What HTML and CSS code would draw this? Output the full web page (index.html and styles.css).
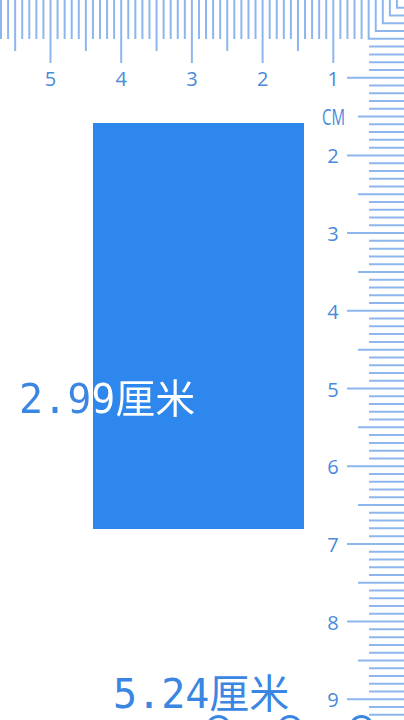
FILE: index.html
```html
<!DOCTYPE html>
<html lang="zh-CN">
<head>
<meta charset="utf-8">
<title>尺子</title>
<link rel="stylesheet" href="styles.css">
</head>
<body>
<main class="stage">
  <svg class="rulers" width="404" height="720" viewBox="0 0 404 720" xmlns="http://www.w3.org/2000/svg">
    <path class="ticks" d="M361.58 0v39M354.51 0v39M347.44 0v39M340.37 0v39M333.3 0v63M326.23 0v39M319.16 0v39M312.09 0v39M305.02 0v39M297.95 0v51M290.88 0v39M283.81 0v39M276.74 0v39M269.67 0v39M262.6 0v63M255.53 0v39M248.46 0v39M241.39 0v39M234.32 0v39M227.25 0v51M220.18 0v39M213.11 0v39M206.04 0v39M198.97 0v39M191.9 0v63M184.83 0v39M177.76 0v39M170.69 0v39M163.62 0v39M156.55 0v51M149.48 0v39M142.41 0v39M135.34 0v39M128.27 0v39M121.2 0v63M114.13 0v39M107.06 0v39M99.99 0v39M92.92 0v39M85.85 0v51M78.78 0v39M71.71 0v39M64.64 0v39M57.57 0v39M50.5 0v63M43.43 0v39M36.36 0v39M29.29 0v39M22.22 0v39M15.15 0v51M8.08 0v39M1.01 0v39"/>
    <path class="ticks" d="M396.93 0V7.77H404M389.86 0V15.54H404M382.79 0V23.31H404M375.72 0V31.08H404M368.65 0V38.85H404"/>
    <path class="ticks" d="M369 46.62h35M369 54.39h35M369 62.16h35M369 69.93h35M347 77.7h57M369 85.47h35M369 93.24h35M369 101.01h35M369 108.78h35M358 116.55h46M369 124.32h35M369 132.09h35M369 139.86h35M369 147.63h35M347 155.4h57M369 163.17h35M369 170.94h35M369 178.71h35M369 186.48h35M358 194.25h46M369 202.02h35M369 209.79h35M369 217.56h35M369 225.33h35M347 233.1h57M369 240.87h35M369 248.64h35M369 256.41h35M369 264.18h35M358 271.95h46M369 279.72h35M369 287.49h35M369 295.26h35M369 303.03h35M347 310.8h57M369 318.57h35M369 326.34h35M369 334.11h35M369 341.88h35M358 349.65h46M369 357.42h35M369 365.19h35M369 372.96h35M369 380.73h35M347 388.5h57M369 396.27h35M369 404.04h35M369 411.81h35M369 419.58h35M358 427.35h46M369 435.12h35M369 442.89h35M369 450.66h35M369 458.43h35M347 466.2h57M369 473.97h35M369 481.74h35M369 489.51h35M369 497.28h35M358 505.05h46M369 512.82h35M369 520.59h35M369 528.36h35M369 536.13h35M347 543.9h57M369 551.67h35M369 559.44h35M369 567.21h35M369 574.98h35M358 582.75h46M369 590.52h35M369 598.29h35M369 606.06h35M369 613.83h35M347 621.6h57M369 629.37h35M369 637.14h35M369 644.91h35M369 652.68h35M358 660.45h46M369 668.22h35M369 675.99h35M369 683.76h35M369 691.53h35M347 699.3h57M369 707.07h35M369 714.84h35"/>

    <g class="scale-num">
      <text x="50.5" y="86">5</text>
      <text x="121.2" y="86">4</text>
      <text x="191.9" y="86">3</text>
      <text x="262.6" y="86">2</text>
      <text x="333.3" y="86">1</text>
      <text x="333" y="163.4">2</text>
      <text x="333" y="241.1">3</text>
      <text x="333" y="318.8">4</text>
      <text x="333" y="396.5">5</text>
      <text x="333" y="474.2">6</text>
      <text x="333" y="551.9">7</text>
      <text x="333" y="629.6">8</text>
      <text x="333" y="707.3">9</text>
      <text class="unit" x="333.5" y="124.5" textLength="23" lengthAdjust="spacingAndGlyphs">CM</text>
    </g>

    <g class="handles">
      <circle cx="218.5" cy="727.5" r="11"/>
      <circle cx="290" cy="727.5" r="11"/>
      <circle cx="361.5" cy="727.5" r="11"/>
    </g>
  </svg>

  <div class="box"></div>
  <p class="measure measure-w">2.99厘米</p>
  <p class="measure measure-h">5.24厘米</p>
</main>
</body>
</html>
```

FILE: styles.css
```css
html, body {
  margin: 0;
  padding: 0;
  background: #ffffff;
}

.stage {
  position: relative;
  width: 404px;
  height: 720px;
  overflow: hidden;
  background: #ffffff;
}

.rulers {
  position: absolute;
  left: 0;
  top: 0;
  display: block;
}

.ticks {
  fill: none;
  stroke: #8db6ee;
  stroke-width: 2;
  stroke-linejoin: miter;
}

.scale-num {
  font-family: "Open Sans", "DejaVu Sans", sans-serif;
  font-size: 20px;
  fill: #4a8ad9;
  text-anchor: middle;
}

.scale-num .unit {
  font-size: 21px;
}

.handles circle {
  fill: none;
  stroke: #3a86e2;
  stroke-width: 3;
}

.box {
  position: absolute;
  left: 93px;
  top: 123px;
  width: 211px;
  height: 406px;
  background: #2e87ec;
}

.measure {
  position: absolute;
  margin: 0;
  font-family: "DejaVu Sans Mono", "Noto Sans CJK SC", monospace;
  font-size: 40px;
  line-height: 40px;
  white-space: nowrap;
  color: #3a86e2;
}

.measure-w {
  left: 19px;
  top: 379px;
  background: linear-gradient(90deg, #3a86e2 74px, #ffffff 74px);
  -webkit-background-clip: text;
  background-clip: text;
  color: transparent;
}

.measure-h {
  left: 113px;
  top: 674px;
}
```
